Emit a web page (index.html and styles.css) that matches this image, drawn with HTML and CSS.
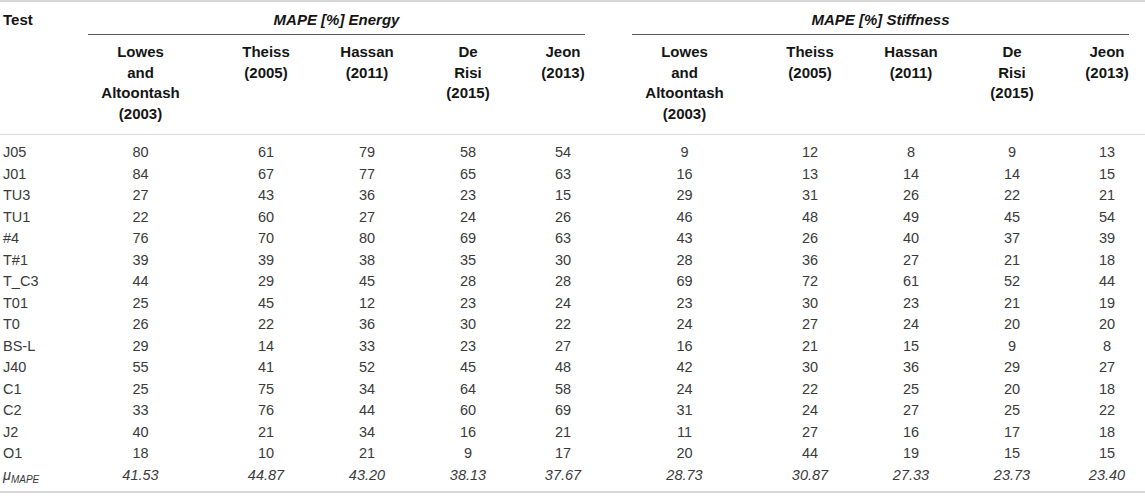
FILE: index.html
```html
<!DOCTYPE html>
<html>
<head>
<meta charset="utf-8">
<link rel="stylesheet" href="styles.css">
</head>
<body>
<div class="table">
  <div class="thead">
    <div class="test-head">Test</div>
    <div class="group group-energy">MAPE [%] Energy</div>
    <div class="group group-stiff">MAPE [%] Stiffness</div>
    <div class="sub"><span>Lowes<br>and<br>Altoontash<br>(2003)</span></div>
    <div class="sub"><span>Theiss<br>(2005)</span></div>
    <div class="sub"><span>Hassan<br>(2011)</span></div>
    <div class="sub"><span>De<br>Risi<br>(2015)</span></div>
    <div class="sub"><span>Jeon<br>(2013)</span></div>
    <div class="sub-gap"></div>
    <div class="sub"><span>Lowes<br>and<br>Altoontash<br>(2003)</span></div>
    <div class="sub"><span>Theiss<br>(2005)</span></div>
    <div class="sub"><span>Hassan<br>(2011)</span></div>
    <div class="sub"><span>De<br>Risi<br>(2015)</span></div>
    <div class="sub"><span>Jeon<br>(2013)</span></div>
  </div>
  <div class="tbody">
    <div class="row"><div>J05</div><div>80</div><div>61</div><div>79</div><div>58</div><div>54</div><div>9</div><div>12</div><div>8</div><div>9</div><div>13</div></div>
    <div class="row"><div>J01</div><div>84</div><div>67</div><div>77</div><div>65</div><div>63</div><div>16</div><div>13</div><div>14</div><div>14</div><div>15</div></div>
    <div class="row"><div>TU3</div><div>27</div><div>43</div><div>36</div><div>23</div><div>15</div><div>29</div><div>31</div><div>26</div><div>22</div><div>21</div></div>
    <div class="row"><div>TU1</div><div>22</div><div>60</div><div>27</div><div>24</div><div>26</div><div>46</div><div>48</div><div>49</div><div>45</div><div>54</div></div>
    <div class="row"><div>#4</div><div>76</div><div>70</div><div>80</div><div>69</div><div>63</div><div>43</div><div>26</div><div>40</div><div>37</div><div>39</div></div>
    <div class="row"><div>T#1</div><div>39</div><div>39</div><div>38</div><div>35</div><div>30</div><div>28</div><div>36</div><div>27</div><div>21</div><div>18</div></div>
    <div class="row"><div>T_C3</div><div>44</div><div>29</div><div>45</div><div>28</div><div>28</div><div>69</div><div>72</div><div>61</div><div>52</div><div>44</div></div>
    <div class="row"><div>T01</div><div>25</div><div>45</div><div>12</div><div>23</div><div>24</div><div>23</div><div>30</div><div>23</div><div>21</div><div>19</div></div>
    <div class="row"><div>T0</div><div>26</div><div>22</div><div>36</div><div>30</div><div>22</div><div>24</div><div>27</div><div>24</div><div>20</div><div>20</div></div>
    <div class="row"><div>BS-L</div><div>29</div><div>14</div><div>33</div><div>23</div><div>27</div><div>16</div><div>21</div><div>15</div><div>9</div><div>8</div></div>
    <div class="row"><div>J40</div><div>55</div><div>41</div><div>52</div><div>45</div><div>48</div><div>42</div><div>30</div><div>36</div><div>29</div><div>27</div></div>
    <div class="row"><div>C1</div><div>25</div><div>75</div><div>34</div><div>64</div><div>58</div><div>24</div><div>22</div><div>25</div><div>20</div><div>18</div></div>
    <div class="row"><div>C2</div><div>33</div><div>76</div><div>44</div><div>60</div><div>69</div><div>31</div><div>24</div><div>27</div><div>25</div><div>22</div></div>
    <div class="row"><div>J2</div><div>40</div><div>21</div><div>34</div><div>16</div><div>21</div><div>11</div><div>27</div><div>16</div><div>17</div><div>18</div></div>
    <div class="row"><div>O1</div><div>18</div><div>10</div><div>21</div><div>9</div><div>17</div><div>20</div><div>44</div><div>19</div><div>15</div><div>15</div></div>
    <div class="row row-mean"><div>μ<sub>MAPE</sub></div><div>41.53</div><div>44.87</div><div>43.20</div><div>38.13</div><div>37.67</div><div>28.73</div><div>30.87</div><div>27.33</div><div>23.73</div><div>23.40</div></div>
  </div>
</div>
</body>
</html>
```

FILE: styles.css
```css
html, body {
  margin: 0;
  padding: 0;
  background: #ffffff;
}

body {
  font-family: "Liberation Sans", Arial, sans-serif;
  width: 1145px;
}

.table {
  --cols: 88px 105px 146px 56px 146px 44px 47px 105px 146px 56px 146px 44px 16px;
  border-top: 2px solid #d6d6d6;
  border-bottom: 2px solid #d6d6d6;
}

.thead {
  display: grid;
  grid-template-columns: var(--cols);
  grid-template-rows: auto auto;
  border-bottom: 1px solid #dcdcdc;
  font-weight: bold;
  font-size: 15px;
  color: #151515;
}

.test-head {
  grid-column: 1;
  grid-row: 1 / 3;
  padding: 8px 0 0 3px;
  line-height: 20px;
}

.group {
  grid-row: 1;
  padding: 8px 0 4px;
  line-height: 20px;
  font-style: italic;
  text-align: center;
  border-bottom: 1px solid #555555;
}

.group-energy {
  grid-column: 2 / 7;
}

.group-stiff {
  grid-column: 8 / 13;
}

.sub,
.sub-gap {
  grid-row: 2;
}

.sub {
  display: flex;
  justify-content: center;
  padding: 7px 0 10px;
  line-height: 20.5px;
  text-align: center;
}

.sub span {
  white-space: nowrap;
  flex: none;
}

.tbody {
  padding: 7px 0 5px;
  font-size: 14.5px;
  color: #3a3a3a;
}

.row {
  display: grid;
  grid-template-columns: var(--cols);
  line-height: 21.5px;
  height: 21.5px;
}

.row > div {
  text-align: center;
  white-space: nowrap;
}

.row > div:first-child {
  text-align: left;
  padding-left: 3px;
}

.row > div:nth-child(7) {
  grid-column-start: 8;
}

.row-mean > div {
  font-style: italic;
}

.row-mean sub {
  font-size: 10px;
  vertical-align: -3px;
  line-height: 0;
}
```
